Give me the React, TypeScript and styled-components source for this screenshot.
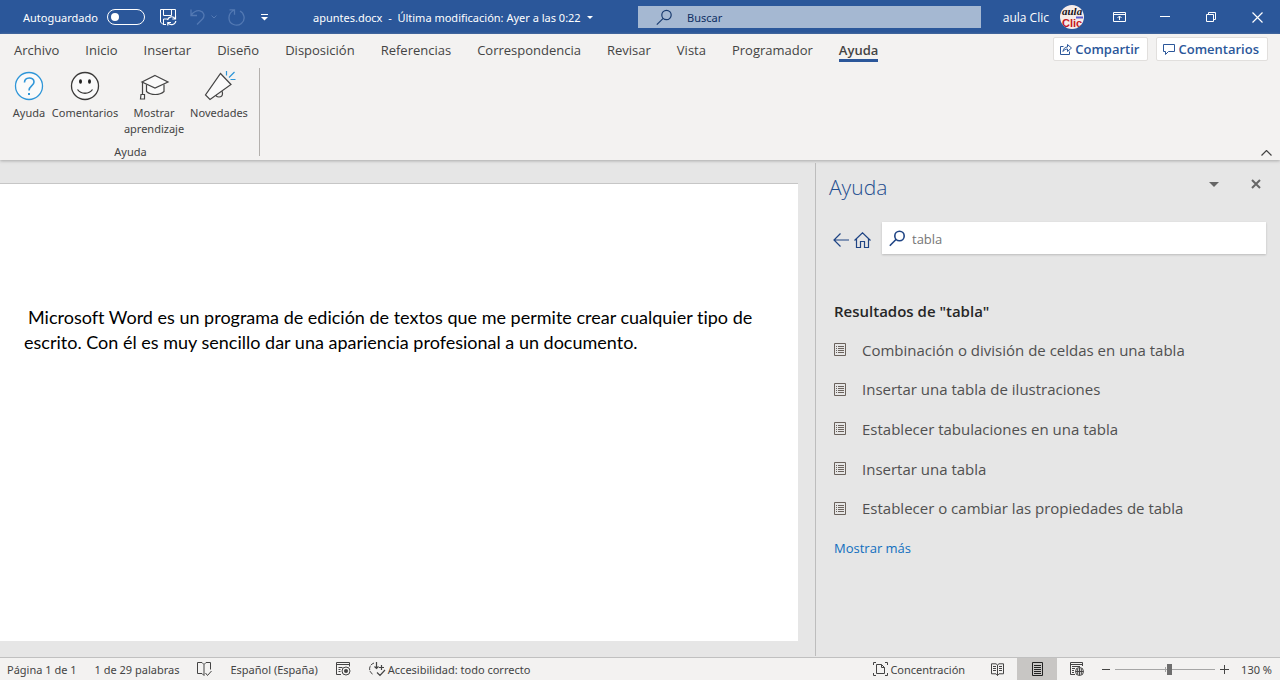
import React from "react";
import styled, { createGlobalStyle } from "styled-components";

const BLUE = "#2b579a";
const PANE_FONT = `"Open Sans", "Noto Sans", sans-serif`;
const CHROME_FONT = `"Noto Sans", "Open Sans", sans-serif`;

const GlobalStyle = createGlobalStyle`
  *, *::before, *::after { box-sizing: border-box; }
  body { margin: 0; background: #e6e6e6; font-family: ${CHROME_FONT}; color: #444; }
  button, input { font: inherit; color: inherit; }
  button { background: none; border: 0; padding: 0; cursor: pointer; }
  h1, h2, ul, p { margin: 0; padding: 0; }
  ul { list-style: none; }
  a { text-decoration: none; }
  svg { display: block; flex: none; }
`;

const Window = styled.div`
  display: flex;
  flex-direction: column;
  min-height: 100vh;
`;

/* Title bar */
const TitleBar = styled.header`
  display: flex;
  align-items: center;
  height: 34px;
  background: ${BLUE};
  color: #fff;
  font-size: 11px;
  white-space: nowrap;
`;

const QuickAccess = styled.div`
  display: flex;
  align-items: center;
  flex: 0 0 313px;
  padding-left: 23px;
`;

const AutoSave = styled.label`
  display: flex;
  align-items: center;
  gap: 9px;
  margin-right: 15px;
`;

const Toggle = styled.input`
  appearance: none;
  display: flex;
  align-items: center;
  width: 38px;
  height: 16px;
  margin: 0;
  padding-left: 3px;
  border: 1px solid #fff;
  border-radius: 8px;
  &::before {
    content: "";
    width: 8px;
    height: 8px;
    border-radius: 50%;
    background: #fff;
  }
`;

const QuickButton = styled.button<{ $gap?: number; $dim?: boolean }>`
  margin-right: ${(p) => p.$gap ?? 0}px;
  color: ${(p) => (p.$dim ? "#5379b3" : "#fff")};
`;

const DocumentTitle = styled.button`
  display: flex;
  align-items: center;
  gap: 6px;
  flex: 0 0 325px;
  white-space: pre;
`;

const TitleSearch = styled.label`
  display: flex;
  align-items: center;
  flex: 1;
  gap: 14px;
  height: 22px;
  padding-left: 18px;
  background: #a5b8d2;
  color: #1a3c70;
`;

const TitleSearchInput = styled.input`
  flex: 1;
  min-width: 0;
  padding: 0;
  border: 0;
  background: none;
  outline: none;
  &::placeholder { color: #0f2f63; opacity: 1; }
`;

const WindowControls = styled.div`
  display: flex;
  align-items: center;
  justify-content: flex-end;
  flex: 0 0 299px;
`;

const Account = styled.button`
  display: flex;
  align-items: center;
  gap: 11px;
  margin-right: 12px;
  font-family: ${PANE_FONT};
  font-size: 12px;
`;

const ControlButton = styled.button`
  display: flex;
  align-items: center;
  justify-content: center;
  width: 46px;
  height: 34px;
`;

/* Ribbon */
const Ribbon = styled.div`
  position: relative;
  display: flex;
  flex-direction: column;
  background: #f3f2f1;
  box-shadow: 0 1px 3px #a8a8a8;
`;

const TabRow = styled.div`
  display: flex;
  justify-content: space-between;
  padding: 0 12px 0 14px;
`;

const Tabs = styled.div`
  display: flex;
  gap: 26px;
`;

const Tab = styled.button<{ $active?: boolean }>`
  height: 28px;
  padding-top: 6px;
  border-bottom: 3px solid ${(p) => (p.$active ? BLUE : "transparent")};
  font-family: ${PANE_FONT};
  font-size: 13px;
  line-height: 18px;
  font-weight: ${(p) => (p.$active ? 600 : 400)};
`;

const TabActions = styled.div`
  display: flex;
  gap: 8px;
  padding-top: 3px;
`;

const ActionButton = styled.button`
  display: flex;
  align-items: center;
  gap: 3px;
  height: 24px;
  padding: 0 8px 0 6px;
  border: 1px solid #e1dfdd;
  border-radius: 2px;
  background: #fff;
  color: ${BLUE};
  font-family: ${PANE_FONT};
  font-size: 13px;
  font-weight: 600;
`;

const RibbonBody = styled.div`
  display: flex;
  justify-content: space-between;
  padding: 6px 8px 0 12px;
`;

const RibbonGroup = styled.section`
  display: flex;
  flex-direction: column;
  justify-content: space-between;
  height: 92px;
  padding: 3px 0 1px;
`;

const GroupDivider = styled.div`
  flex: 0 0 1px;
  height: 88px;
  margin: 0 auto 0 10px;
  background: #b3b0ad;
`;

const GroupButtons = styled.div`
  display: flex;
  gap: 5px;
`;

const RibbonButton = styled.button<{ $width: number }>`
  display: flex;
  flex-direction: column;
  align-items: center;
  gap: 4px;
  width: ${(p) => p.$width}px;
  font-size: 11px;
  line-height: 16px;
`;

const GroupLabel = styled.div`
  font-size: 11px;
  line-height: 14px;
  text-align: center;
`;

const CollapseButton = styled.button`
  align-self: flex-end;
  padding-bottom: 4px;
`;

/* Workspace */
const Workspace = styled.div`
  display: flex;
  flex: 1;
`;

const Canvas = styled.main`
  display: flex;
  flex: 1;
  min-width: 0;
  padding: 23px 17px 17px 0;
`;

const Page = styled.article`
  flex: 1;
  padding: 121px 40px 60px 24px;
  border-top: 1px solid #c6c6c6;
  background: #fff;
`;

const Paragraph = styled.p`
  color: #000;
  font-family: Lato, "Open Sans", sans-serif;
  font-size: 18px;
  font-variant-ligatures: none;
  line-height: 25px;
  text-indent: 4px;
`;

const HelpPane = styled.aside`
  display: flex;
  flex-direction: column;
  flex: 0 0 465px;
  margin: 3px 0 2px;
  padding: 9px 14px 0 13px;
  border-left: 1px solid #bdbdbd;
  font-family: ${PANE_FONT};
`;

const PaneHeader = styled.div`
  display: flex;
  align-items: center;
  justify-content: space-between;
`;

const PaneTitle = styled.h1`
  color: #1f4e8f;
  font-size: 21px;
  font-weight: 300;
  line-height: 30px;
`;

const PaneControls = styled.div`
  display: flex;
  gap: 32px;
  padding: 0 5px 6px 0;
  color: #666;
`;

const PaneSearchRow = styled.div`
  display: flex;
  align-items: center;
  margin-top: 20px;
  padding-left: 4px;
  color: #1f4484;
`;

const NavButtons = styled.div`
  display: flex;
  align-items: center;
  gap: 5px;
  margin: 4px 11px 0 0;
`;

const PaneSearch = styled.label`
  display: flex;
  align-items: center;
  flex: 1;
  gap: 6px;
  height: 32px;
  padding-left: 7px;
  background: #fff;
  box-shadow: 0 1px 2px #bbb;
`;

const PaneSearchInput = styled.input`
  flex: 1;
  min-width: 0;
  padding: 2px 0 0;
  border: 0;
  outline: none;
  background: none;
  color: #767676;
  font-size: 13px;
`;

const Results = styled.section`
  padding: 46px 0 0 5px;
`;

const ResultsTitle = styled.h2`
  color: #262626;
  font-size: 15px;
  font-weight: 600;
  line-height: 22px;
`;

const ResultList = styled.ul`
  display: grid;
  grid-auto-rows: 1fr;
  min-height: 198px;
  margin-top: 8px;
`;

const ResultLink = styled.a`
  display: flex;
  align-items: center;
  gap: 16px;
  height: 100%;
  color: #505050;
  font-size: 15px;
`;

const MoreLink = styled.a`
  color: #106ebe;
  font-size: 13px;
  line-height: 40px;
`;

/* Status bar */
const StatusBar = styled.footer`
  display: flex;
  align-items: center;
  justify-content: space-between;
  height: 22px;
  padding: 0 8px 0 7px;
  background: #f3f2f1;
  box-shadow: 0 -1px 0 #c0c0c0;
  font-size: 11px;
  white-space: nowrap;
`;

const StatusGroup = styled.div<{ $gap?: number }>`
  display: flex;
  align-items: center;
  gap: ${(p) => p.$gap ?? 0}px;
`;

const StatusButton = styled.button`
  display: flex;
  align-items: center;
  gap: 2px;
`;

const ViewButton = styled.button<{ $active?: boolean }>`
  display: flex;
  align-items: center;
  justify-content: center;
  width: 40px;
  height: 22px;
  background: ${(p) => (p.$active ? "#c8c6c4" : "none")};
  color: ${(p) => (p.$active ? "#222" : "#444")};
`;

const ZoomSlider = styled.input`
  appearance: none;
  width: 100px;
  height: 12px;
  margin: 0;
  background: linear-gradient(#a6a6a6, #a6a6a6) center / 100% 1px no-repeat,
    linear-gradient(#a6a6a6, #a6a6a6) 50% 50% / 1px 5px no-repeat;
  &::-webkit-slider-thumb {
    appearance: none;
    width: 5px;
    height: 11px;
    background: #6e6e6e;
  }
`;

const ZoomValue = styled.button`
  margin-left: 7px;
`;

type IconProps = { w: number; h: number; children: React.ReactNode; sw?: number };
const Icon = ({ w, h, children, sw = 1 }: IconProps) => (
  <svg width={w} height={h} viewBox={`0 0 ${w} ${h}`} fill="none" stroke="currentColor" strokeWidth={sw} aria-hidden="true">
    {children}
  </svg>
);

const SaveIcon = () => (
  <Icon w={17} h={17}>
    <path d="M6 15.5H3L.5 13V.5h15V7M3.500.5v6h8v-6M3.500 15.500v-5.500h4" />
    <path d="M7.500 11a4.200 4.200 0 0 1 7.500-1.500M15.500 6.800v3.200h-3.200M15.800 12a4.200 4.200 0 0 1-7.500 2M7.800 16.500v-3H11" strokeWidth={1.200} />
  </Icon>
);
const UndoIcon = () => (
  <Icon w={15} h={16} sw={1.300}>
    <path d="M1 .5v6h6M1.200 6C4 2.500 7 1.300 10 1.800c4 .8 5.200 5.200 2.500 8.200L7 15.500" />
  </Icon>
);
const CaretIcon = () => (
  <Icon w={6} h={4}><path d="M.5.5 3 3 5.500.5" /></Icon>
);
const RedoIcon = () => (
  <Icon w={17} h={17} sw={1.300}>
    <path d="M1.500.8h5v5M6.300 1C-.5 4-.8 13 5.500 15.500c6 2.300 11.500-2.500 10.500-8C15.500 5 14 3 12 2" />
  </Icon>
);
const CustomizeIcon = () => (
  <Icon w={7} h={7}><path d="M0 .5h7" /><path d="M0 3h7L3.500 6.500z" fill="currentColor" stroke="none" /></Icon>
);
const DownTriangle = ({ w, h }: { w: number; h: number }) => (
  <Icon w={w} h={h}><path d={`M0 0h${w}L${w / 2} ${h}z`} fill="currentColor" stroke="none" /></Icon>
);
const SearchIcon = ({ sw }: { sw: number }) => (
  <Icon w={17} h={17} sw={sw}><circle cx="10.500" cy="6" r="4.700" /><path d="M7.200 9.300.8 15.700" /></Icon>
);
const Avatar = () => (
  <svg width="24" height="24" viewBox="0 0 24 24" role="img" aria-label="aula Clic">
    <clipPath id="avatar"><circle cx="12" cy="12" r="12" /></clipPath>
    <g clipPath="url(#avatar)">
      <rect width="24" height="24" fill="#f7ece9" />
      <path d="M16 12.500h7" stroke="#5a5bd0" strokeWidth="2" />
      <text x="2" y="10" fontFamily="Liberation Serif, serif" fontSize="11" fontStyle="italic" fontWeight="700" fill="#17131a">aula</text>
      <text x="2" y="22" fontFamily="Liberation Sans, sans-serif" fontSize="11" fontWeight="700" fill="#c3161c">Clic</text>
    </g>
  </svg>
);
const RibbonOptionsIcon = () => (
  <Icon w={13} h={10}><path d="M.5.5h12v9H.5zM.5 2.500h12M6.500 8V4.200M4.500 6l2-2 2 2" /></Icon>
);
const MinimizeIcon = () => <Icon w={10} h={2}><path d="M0 .5h10" /></Icon>;
const RestoreIcon = () => (
  <Icon w={10} h={10}><path d="M.5 2.500h7v7h-7zM2.500 2.500v-2h7v7h-2" /></Icon>
);
const CloseIcon = () => <Icon w={11} h={11} sw={1.200}><path d="m.5.5 10 10M10.500.5l-10 10" /></Icon>;
const ShareIcon = () => (
  <Icon w={12} h={12}><path d="M3.500 3.500h-3v8h9v-3M3 8.500c.3-3 2-4.500 4.500-4.500V1.500l4 3.500-4 3.500V6C5.500 6 4 6.800 3 8.500z" /></Icon>
);
const CommentIcon = () => (
  <Icon w={12} h={11}><path d="M.5.500h11v7h-6l-3 3v-3h-2z" /></Icon>
);

const HelpIcon = () => (
  <Icon w={34} h={30}>
    <circle cx="17" cy="15" r="13.500" fill="#fafafa" stroke="#2f96d8" strokeWidth={1.300} />
    <path d="M12.500 11.500c0-6 9.500-6 9.500-.5 0 4-5 4-5 8.500" stroke="#2f96d8" strokeWidth={1.600} />
    <path d="M16 22h2v2h-2z" fill="#2f96d8" stroke="none" />
  </Icon>
);
const SmileIcon = () => (
  <Icon w={34} h={30}>
    <circle cx="17" cy="15" r="13.500" fill="#fafafa" stroke="#3b3a39" strokeWidth={1.300} />
    <ellipse cx="12.500" cy="10.500" rx="1.500" ry="2.300" fill="#222" stroke="none" />
    <ellipse cx="21.500" cy="10.500" rx="1.500" ry="2.300" fill="#222" stroke="none" />
    <path d="M9.500 18.500c3.500 5 11.500 5 15 0" stroke="#3b3a39" strokeWidth={1.300} />
  </Icon>
);
const LearnIcon = () => (
  <Icon w={34} h={30} sw={1.200}>
    <path d="M9.500 13.500v7c4.500 4 13 4 17.500 0v-7" fill="#fafafa" />
    <path d="m18 4.500 13 6.500-13 6L5 11z" fill="#fafafa" />
    <path d="M5.500 11v12M4 23.500h3.500v4.500H3.500z" fill="#fafafa" />
  </Icon>
);
const MegaphoneIcon = () => (
  <Icon w={34} h={30} sw={1.200}>
    <circle cx="17" cy="22.500" r="3.500" />
    <path d="m18.500 2.500 10.500 11L8 28.500 3.500 24z" fill="#fafafa" />
    <path d="M24.500 4.500V0M27 6.500 32.500 1M28.500 8.500h5" stroke="#2f96d8" />
  </Icon>
);
const CollapseIcon = () => <Icon w={11} h={6} sw={1.200}><path d="m.5 5.500 5-5 5 5" /></Icon>;
const PaneCloseIcon = () => <Icon w={10} h={10} sw={2}><path d="m1 1 8 8M9 1 1 9" /></Icon>;
const BackIcon = () => <Icon w={16} h={14} sw={1.200}><path d="M16 7H1M7.500.5 1 7l6.500 6.500" /></Icon>;
const HomeIcon = () => (
  <Icon w={17} h={16} sw={1.200}><path d="M.5 8.500 8.500.8l8 7.700M2.500 7v8.500h4v-6h4v6h4V7" /></Icon>
);
const ArticleIcon = () => (
  <Icon w={12} h={13}>
    <path d="M.5.5h11v12H.5z" stroke="#6b625c" />
    <path d="M2 3.500h1M4 3.500h6M2 5.500h1M4 5.500h6M2 7.500h1M4 7.500h6M2 9.500h1M4 9.500h6" stroke="#6b625c" />
  </Icon>
);

const ProofIcon = () => (
  <Icon w={15} h={14}><path d="M7 13.500V2.500L5 .5H.5v11H5l2 2M7 2.500l2-2h4.500v7M8.500 11l2 2.500 4-4.500" /></Icon>
);
const MacroIcon = () => (
  <Icon w={15} h={14}>
    <path d="M5 12.500H.5V.5h13v4M.5 2.500h13M2.500 5.500h4M2.500 7.500h2M2.500 9.500h2" />
    <circle cx="10" cy="9" r="4" /><circle cx="10" cy="9" r="2" fill="currentColor" stroke="none" />
  </Icon>
);
const AccessibilityIcon = () => (
  <Icon w={17} h={15}>
    <path d="M5 1C-.8 3-.8 10.500 4.500 12.500" strokeDasharray="4 1" />
    <path d="M7.500 0v6.500M5.500 4.500l2 2 2-2M12.500 3v5M10 5.500h5M8 10.500l3 3 5-5.500" strokeWidth={1.200} />
  </Icon>
);
const FocusIcon = () => (
  <Icon w={15} h={14}>
    <path d="M3 .5H.5V3M12 .5h2.500V3M3 13.500H.5V11M12 13.500h2.500V11" />
    <path d="M3.500 2.500h5l3 3v6h-8zM8.500 2.500v3h3" />
  </Icon>
);
const ReadIcon = () => (
  <Icon w={13} h={13}>
    <path d="M6.500 12.500V2L5 .8H.5v10H5L6.500 12.500 8 10.800h4.500V.8H8L6.500 2M2 3.500h3M2 5.500h3M2 7.500h3M8 3.500h3M8 5.500h3M8 7.500h3" />
  </Icon>
);
const PrintIcon = () => (
  <Icon w={11} h={14}><path d="M.5.5h10v13H.5zM2 3.500h7M2 5.500h7M2 7.500h7M2 9.500h7M2 11.500h7" /></Icon>
);
const WebIcon = () => (
  <Icon w={14} h={14}>
    <path d="M5 12.500H.5V.5h12V4M.5 2.500h12M2 4.500h8M2 6.500h3M2 8.500h2M2 10.500h2" />
    <circle cx="9.500" cy="9.500" r="4" /><path d="M5.500 9.500h8M9.500 5.500v8M7.700 6.500v6M11.300 6.500v6" />
  </Icon>
);
const MinusIcon = () => <Icon w={9} h={9}><path d="M1 4.500h8" /></Icon>;
const PlusIcon = () => <Icon w={9} h={9}><path d="M0 4.500h9M4.500 0v9" /></Icon>;

const TABS = ["Archivo", "Inicio", "Insertar", "Diseño", "Disposición", "Referencias", "Correspondencia", "Revisar", "Vista", "Programador", "Ayuda"];

const COMMANDS = [
  { label: "Ayuda", width: 34, icon: <HelpIcon /> },
  { label: "Comentarios", width: 68, icon: <SmileIcon /> },
  { label: "Mostrar aprendizaje", width: 60, icon: <LearnIcon /> },
  { label: "Novedades", width: 60, icon: <MegaphoneIcon /> },
];

const RESULTS = [
  "Combinación o división de celdas en una tabla",
  "Insertar una tabla de ilustraciones",
  "Establecer tabulaciones en una tabla",
  "Insertar una tabla",
  "Establecer o cambiar las propiedades de tabla",
];

export default function App() {
  return (
    <Window>
      <GlobalStyle />
      <TitleBar>
        <QuickAccess>
          <AutoSave>
            Autoguardado
            <Toggle type="checkbox" />
          </AutoSave>
          <QuickButton aria-label="Guardar" $gap={13}><SaveIcon /></QuickButton>
          <QuickButton aria-label="Deshacer" $dim $gap={6}><UndoIcon /></QuickButton>
          <QuickButton aria-label="Opciones de deshacer" $dim $gap={11}><CaretIcon /></QuickButton>
          <QuickButton aria-label="Rehacer" $dim $gap={16}><RedoIcon /></QuickButton>
          <QuickButton aria-label="Personalizar barra"><CustomizeIcon /></QuickButton>
        </QuickAccess>
        <DocumentTitle>
          {"apuntes.docx  -  Última modificación: Ayer a las 0:22"}
          <DownTriangle w={6} h={3} />
        </DocumentTitle>
        <TitleSearch>
          <SearchIcon sw={1.200} />
          <TitleSearchInput type="text" placeholder="Buscar" aria-label="Buscar" />
        </TitleSearch>
        <WindowControls>
          <Account>
            aula Clic
            <Avatar />
          </Account>
          <ControlButton aria-label="Opciones de la cinta"><RibbonOptionsIcon /></ControlButton>
          <ControlButton aria-label="Minimizar"><MinimizeIcon /></ControlButton>
          <ControlButton aria-label="Restaurar"><RestoreIcon /></ControlButton>
          <ControlButton aria-label="Cerrar"><CloseIcon /></ControlButton>
        </WindowControls>
      </TitleBar>

      <Ribbon>
        <TabRow>
          <Tabs role="tablist">
            {TABS.map((name) => (
              <Tab key={name} role="tab" aria-selected={name === "Ayuda"} $active={name === "Ayuda"}>{name}</Tab>
            ))}
          </Tabs>
          <TabActions>
            <ActionButton><ShareIcon />Compartir</ActionButton>
            <ActionButton><CommentIcon />Comentarios</ActionButton>
          </TabActions>
        </TabRow>
        <RibbonBody>
          <RibbonGroup>
            <GroupButtons>
              {COMMANDS.map((c) => (
                <RibbonButton key={c.label} $width={c.width}>{c.icon}{c.label}</RibbonButton>
              ))}
            </GroupButtons>
            <GroupLabel>Ayuda</GroupLabel>
          </RibbonGroup>
          <GroupDivider />
          <CollapseButton aria-label="Contraer la cinta"><CollapseIcon /></CollapseButton>
        </RibbonBody>
      </Ribbon>

      <Workspace>
        <Canvas>
          <Page>
            <Paragraph>
              Microsoft Word es un programa de edición de textos que me permite crear cualquier tipo de
              escrito. Con él es muy sencillo dar una apariencia profesional a un documento.
            </Paragraph>
          </Page>
        </Canvas>
        <HelpPane>
          <PaneHeader>
            <PaneTitle>Ayuda</PaneTitle>
            <PaneControls>
              <button aria-label="Opciones del panel"><DownTriangle w={10} h={5} /></button>
              <button aria-label="Cerrar panel"><PaneCloseIcon /></button>
            </PaneControls>
          </PaneHeader>
          <PaneSearchRow>
            <NavButtons>
              <button aria-label="Atrás"><BackIcon /></button>
              <button aria-label="Inicio"><HomeIcon /></button>
            </NavButtons>
            <PaneSearch>
              <SearchIcon sw={1.600} />
              <PaneSearchInput type="text" defaultValue="tabla" aria-label="Buscar en la ayuda" />
            </PaneSearch>
          </PaneSearchRow>
          <Results>
            <ResultsTitle>Resultados de "tabla"</ResultsTitle>
            <ResultList>
              {RESULTS.map((r) => (
                <li key={r}><ResultLink href="#"><ArticleIcon />{r}</ResultLink></li>
              ))}
            </ResultList>
            <MoreLink href="#">Mostrar más</MoreLink>
          </Results>
        </HelpPane>
      </Workspace>

      <StatusBar>
        <StatusGroup $gap={18}>
          <StatusButton>Página 1 de 1</StatusButton>
          <StatusButton>1 de 29 palabras</StatusButton>
          <StatusButton aria-label="Revisión"><ProofIcon /></StatusButton>
          <StatusButton>Español (España)</StatusButton>
          <StatusButton aria-label="Macros"><MacroIcon /></StatusButton>
          <StatusButton><AccessibilityIcon />Accesibilidad: todo correcto</StatusButton>
        </StatusGroup>
        <StatusGroup $gap={12}>
          <StatusButton><FocusIcon />Concentración</StatusButton>
          <StatusGroup $gap={4}>
            <StatusGroup>
              <ViewButton aria-label="Modo de lectura"><ReadIcon /></ViewButton>
              <ViewButton aria-label="Diseño de impresión" $active><PrintIcon /></ViewButton>
              <ViewButton aria-label="Diseño web"><WebIcon /></ViewButton>
            </StatusGroup>
            <StatusGroup $gap={5}>
              <StatusButton aria-label="Alejar"><MinusIcon /></StatusButton>
              <ZoomSlider type="range" min={10} max={200} defaultValue={114} aria-label="Zoom" />
              <StatusButton aria-label="Acercar"><PlusIcon /></StatusButton>
              <ZoomValue>130 %</ZoomValue>
            </StatusGroup>
          </StatusGroup>
        </StatusGroup>
      </StatusBar>
    </Window>
  );
}
